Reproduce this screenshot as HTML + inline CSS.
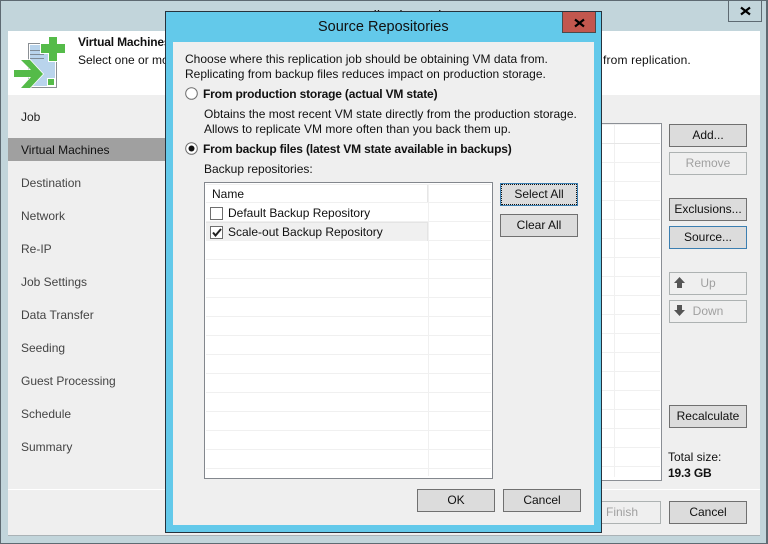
<!DOCTYPE html>
<html><head><meta charset="utf-8"><style>
html,body{margin:0;padding:0;background:#c2d5db}
#r{position:relative;width:768px;height:544px;overflow:hidden;background:#c2d5db;font:12px "Liberation Sans",sans-serif;color:#111}
#r div{position:absolute;box-sizing:border-box}
.t{white-space:nowrap;line-height:14px;height:14px}
.b{font-weight:bold;letter-spacing:-.17px}
.n{color:#444;left:21px}
.btn{width:78px;height:23px;background:#dcdcdc;border:1px solid #707070;text-align:center;line-height:21px;white-space:nowrap}
.dis{background:#efefef;border:1px solid #adb2b2;color:#a0a0a0}
.blue{border:1px solid #3c7fb1}
.h{height:1px;background:#f0f0f0}
.v{width:1px;background:#f0f0f0}
</style></head><body><div id="r">
<div style="left:0;top:0;width:768px;height:544px;border:1px solid #5e6a72;border-width:1px 2px 1px 1px"></div>
<div class="t" style="left:314px;top:8px;font-size:14.5px;height:18px;line-height:18px;color:#111">New Replication Job</div>
<div style="left:728px;top:0;width:34px;height:22px;border:1px solid #5e6a72;border-top:0"></div>
<svg style="position:absolute;left:740px;top:6px" width="11" height="10"><path d="M1 1.500L10 8.500M10 1.500L1 8.500" stroke="#000" stroke-width="2.200" fill="none"/></svg>

<div style="left:8px;top:31px;width:752px;height:505px;background:#efefef;border-bottom:1px solid #aab2b6"></div>
<div style="left:8px;top:31px;width:752px;height:64px;background:#fff"></div>
<div class="t b" style="left:78px;top:35px;">Virtual Machines</div>
<div class="t" style="left:78px;top:53px;">Select one or more VMs</div>
<div class="t" style="left:603px;top:53px;letter-spacing:.15px">from replication.</div>

<svg style="position:absolute;left:10px;top:34px" width="60" height="58" shape-rendering="crispEdges">
<rect x="18" y="9" width="29" height="45" fill="#8a8f94"/>
<rect x="19" y="10" width="27" height="43" fill="#fff"/>
<rect x="20" y="11" width="25" height="41" fill="#b9d4ec"/>
<rect x="20" y="16" width="11" height="1" fill="#7f8b96"/><rect x="20" y="20" width="14" height="1" fill="#7f8b96"/><rect x="20" y="24" width="14" height="1" fill="#7f8b96"/>
<path d="M39 3h8v7h8v9h-8v8h-8v-8h-8v-9h8z" fill="#55bb49" stroke="#fff" stroke-width="2" paint-order="stroke"/>
<rect x="37" y="44" width="8" height="8" fill="#fff"/><rect x="38" y="45" width="6" height="6" fill="#55bb49"/>
<path d="M11 26h9l13 14-13 14h-9l10-11H4v-7h17z" fill="#55bb49" stroke="#fff" stroke-width="1.500" paint-order="stroke" shape-rendering="auto"/>
</svg>

<div class="t n" style="top:110px;color:#222">Job</div>
<div style="left:8px;top:138px;width:157px;height:23px;background:#a0a0a0"></div>
<div class="t n" style="top:143px;color:#111">Virtual Machines</div>
<div class="t n" style="top:176px">Destination</div>
<div class="t n" style="top:209px">Network</div>
<div class="t n" style="top:242px">Re-IP</div>
<div class="t n" style="top:275px">Job Settings</div>
<div class="t n" style="top:308px">Data Transfer</div>
<div class="t n" style="top:341px">Seeding</div>
<div class="t n" style="top:374px">Guest Processing</div>
<div class="t n" style="top:407px">Schedule</div>
<div class="t n" style="top:440px">Summary</div>
<div style="left:8px;top:489px;width:752px;height:1px;background:#fff"></div>

<div style="left:560px;top:123px;width:102px;height:358px;background:#fff;border:1px solid #8b8f95;border-left:0"></div>
<div class="v" style="left:614px;top:125px;height:352px"></div>
<div style="left:560px;top:124px;width:100px;height:1px;background:#efefef"></div>
<div class="h" style="left:560px;top:143px;width:100px;background:#e6e6e6"></div>
<div class="h" style="left:560px;top:162px;width:100px"></div>
<div class="h" style="left:560px;top:181px;width:100px"></div>
<div class="h" style="left:560px;top:200px;width:100px"></div>
<div class="h" style="left:560px;top:219px;width:100px"></div>
<div class="h" style="left:560px;top:238px;width:100px"></div>
<div class="h" style="left:560px;top:257px;width:100px"></div>
<div class="h" style="left:560px;top:276px;width:100px"></div>
<div class="h" style="left:560px;top:295px;width:100px"></div>
<div class="h" style="left:560px;top:314px;width:100px"></div>
<div class="h" style="left:560px;top:333px;width:100px"></div>
<div class="h" style="left:560px;top:352px;width:100px"></div>
<div class="h" style="left:560px;top:371px;width:100px"></div>
<div class="h" style="left:560px;top:390px;width:100px"></div>
<div class="h" style="left:560px;top:409px;width:100px"></div>
<div class="h" style="left:560px;top:428px;width:100px"></div>
<div class="h" style="left:560px;top:447px;width:100px"></div>
<div class="h" style="left:560px;top:466px;width:100px"></div>

<div class="btn" style="left:669px;top:124px">Add...</div>
<div class="btn dis" style="left:669px;top:152px">Remove</div>
<div class="btn" style="left:669px;top:198px">Exclusions...</div>
<div class="btn blue" style="left:669px;top:226px">Source...</div>
<div class="btn dis" style="left:669px;top:272px">Up</div>
<div class="btn dis" style="left:669px;top:300px">Down</div>
<svg style="position:absolute;left:674px;top:277px" width="12" height="11"><path d="M5.500 0L11 6H8v5H3V6H0z" fill="#555"/></svg>
<svg style="position:absolute;left:674px;top:305px" width="12" height="11"><path d="M3 0h5v5h3l-5.500 6L0 5h3z" fill="#555"/></svg>
<div class="btn" style="left:669px;top:405px">Recalculate</div>
<div class="t" style="left:668px;top:450px">Total size:</div>
<div class="t b" style="left:668px;top:466px">19.3 GB</div>
<div class="btn dis" style="left:583px;top:501px">Finish</div>
<div class="btn" style="left:669px;top:501px">Cancel</div>

<!-- dialog -->
<div style="left:165px;top:11px;width:437px;height:522px;background:#63c9ea;border:1px solid #26323c"></div>
<div class="t" style="left:318px;top:18px;font-size:14.5px;height:18px;line-height:18px">Source Repositories</div>
<div style="left:562px;top:12px;width:34px;height:21px;background:#c2574e;border:1px solid #4c4a4a;border-top:0"></div>
<svg style="position:absolute;left:574px;top:18px" width="11" height="10"><path d="M1 1.500L10 8.500M10 1.500L1 8.500" stroke="#000" stroke-width="2.200" fill="none"/></svg>
<div style="left:173px;top:42px;width:421px;height:483px;background:#efefef"></div>

<div class="t" style="left:185px;top:52px">Choose where this replication job should be obtaining VM data from.</div>
<div class="t" style="left:185px;top:67px">Replicating from backup files reduces impact on production storage.</div>
<svg style="position:absolute;left:185px;top:87px" width="13" height="13"><circle cx="6.500" cy="6.500" r="5.800" fill="#fff" stroke="#6e6e6e"/></svg>
<div class="t b" style="left:203px;top:87px">From production storage (actual VM state)</div>
<div class="t" style="left:204px;top:107px">Obtains the most recent VM state directly from the production storage.</div>
<div class="t" style="left:204px;top:122px">Allows to replicate VM more often than you back them up.</div>
<svg style="position:absolute;left:185px;top:142px" width="13" height="13"><circle cx="6.500" cy="6.500" r="5.800" fill="#fff" stroke="#6e6e6e"/><circle cx="6.500" cy="6.500" r="3" fill="#111"/></svg>
<div class="t b" style="left:203px;top:142px">From backup files (latest VM state available in backups)</div>
<div class="t" style="left:204px;top:162px">Backup repositories:</div>

<div style="left:204px;top:182px;width:289px;height:297px;background:#fff;border:1px solid #83878d"></div>
<div style="left:206px;top:184px;width:222px;height:19px;border:1px solid #e6e6e6;border-width:1px 1px 1px 0"></div>
<div class="h" style="left:206px;top:184px;width:285px"></div>
<div class="h" style="left:206px;top:202px;width:285px"></div>
<div class="h" style="left:206px;top:221px;width:285px"></div>
<div class="h" style="left:206px;top:240px;width:285px"></div>
<div class="h" style="left:206px;top:259px;width:285px"></div>
<div class="h" style="left:206px;top:278px;width:285px"></div>
<div class="h" style="left:206px;top:297px;width:285px"></div>
<div class="h" style="left:206px;top:316px;width:285px"></div>
<div class="h" style="left:206px;top:335px;width:285px"></div>
<div class="h" style="left:206px;top:354px;width:285px"></div>
<div class="h" style="left:206px;top:373px;width:285px"></div>
<div class="h" style="left:206px;top:392px;width:285px"></div>
<div class="h" style="left:206px;top:411px;width:285px"></div>
<div class="h" style="left:206px;top:430px;width:285px"></div>
<div class="h" style="left:206px;top:449px;width:285px"></div>
<div class="h" style="left:206px;top:468px;width:285px"></div>
<div class="v" style="left:428px;top:184px;height:292px"></div>
<div style="left:206px;top:222px;width:222px;height:19px;background:#f0f0f0;border:1px solid #e4e4e4;border-width:1px 1px 0 0"></div>
<div class="t" style="left:212px;top:187px">Name</div>
<div style="left:210px;top:207px;width:13px;height:13px;background:#fff;border:1px solid #6e6e6e"></div>
<div class="t" style="left:228px;top:206px">Default Backup Repository</div>
<div style="left:210px;top:226px;width:13px;height:13px;background:#fff;border:1px solid #6e6e6e"></div>
<svg style="position:absolute;left:212px;top:228px" width="10" height="9"><path d="M1 4.500L3.500 7.500L9 1" stroke="#222" stroke-width="2" fill="none"/></svg>
<div class="t" style="left:228px;top:225px">Scale-out Backup Repository</div>

<div class="btn blue" style="left:500px;top:183px">Select All</div>
<div style="left:501px;top:184px;width:76px;height:21px;border:1px dotted #111"></div>
<div class="btn" style="left:500px;top:214px">Clear All</div>
<div class="btn" style="left:417px;top:489px">OK</div>
<div class="btn" style="left:503px;top:489px">Cancel</div>
</div></body></html>
